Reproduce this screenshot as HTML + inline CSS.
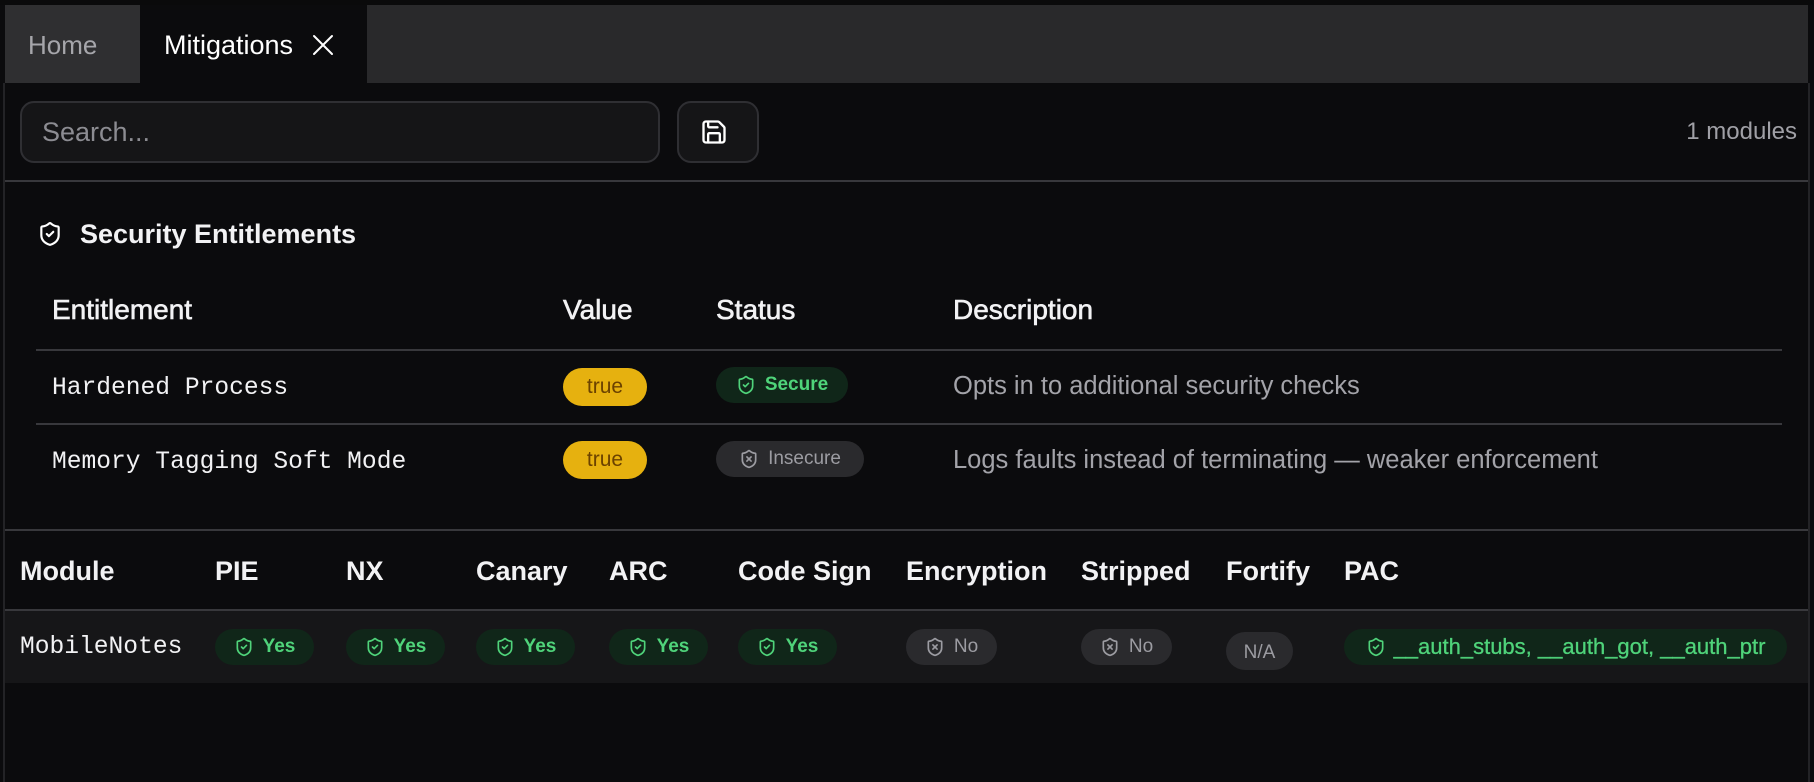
<!DOCTYPE html>
<html><head><meta charset="utf-8"><style>
*{margin:0;padding:0;box-sizing:border-box}
body{width:1814px;height:782px;background:#0b0b0d;position:relative;overflow:hidden;font-family:"Liberation Sans",sans-serif;color:#f2f2f4}
.a{position:absolute;white-space:nowrap}
.mono{font-family:"Liberation Mono",monospace}
.hd{font-size:27px;font-weight:bold;line-height:32px}
.th{font-size:28px;line-height:32px;font-weight:normal;-webkit-text-stroke:0.6px #f2f2f4}
.mh{font-size:27px;line-height:32px;font-weight:bold}
.b{position:absolute;height:36px;border-radius:18px;display:flex;align-items:center;justify-content:center;gap:9px;font-size:19px;font-weight:bold}
.g{background:#102619;color:#4fd37a}
.x{background:#2a2a2d;color:#9c9ca2}
.tr{background:#e6b10f;color:#6b4200;font-weight:normal;font-size:21px}
.ln{position:absolute;height:2px;background:#38383c}
</style></head><body>
<div class="a" style="left:0;top:0;width:1814px;height:5px;background:#0a0a0b"></div>
<div class="a" style="left:5px;top:5px;width:1803px;height:78px;background:#29292b"></div>
<div class="a" style="left:5px;top:5px;width:135px;height:78px;background:#2f2f31"></div>
<div class="a" style="left:28px;top:29px;font-size:26px;line-height:32px;color:#a6a6ab">Home</div>
<div class="a" style="left:140px;top:5px;width:227px;height:78px;background:#0b0b0d"></div>
<div class="a" style="left:164px;top:29px;font-size:27px;line-height:32px;color:#fff">Mitigations</div>
<svg class="a" style="left:311px;top:33px" width="24" height="24" viewBox="0 0 24 24" fill="none" stroke="#fff" stroke-width="2" stroke-linecap="round"><path d="M3 3L21 21M21 3L3 21"/></svg>
<div class="a" style="left:3px;top:83px;width:2px;height:699px;background:#232326"></div>
<div class="a" style="left:1808px;top:83px;width:2px;height:699px;background:#232326"></div>
<div class="a" style="left:20px;top:101px;width:640px;height:62px;border:2px solid #2f2f33;border-radius:14px;background:#151517"></div>
<div class="a" style="left:42px;top:116px;font-size:27px;line-height:32px;color:#8c8c92">Search...</div>
<div class="a" style="left:677px;top:101px;width:82px;height:62px;border:2px solid #2f2f33;border-radius:14px;background:#151517"></div>
<svg class="a" style="left:700px;top:118px" width="28" height="28" viewBox="0 0 24 24" fill="none" stroke="#fff" stroke-width="2" stroke-linecap="round" stroke-linejoin="round"><path d="M15.2 3a2 2 0 0 1 1.4.6l3.8 3.8a2 2 0 0 1 .6 1.4V19a2 2 0 0 1-2 2H5a2 2 0 0 1-2-2V5a2 2 0 0 1 2-2z"/><path d="M17 21v-7a1 1 0 0 0-1-1H8a1 1 0 0 0-1 1v7"/><path d="M7 3v4a1 1 0 0 0 1 1h7"/></svg>
<div class="a" style="right:17px;top:118px;font-size:24px;line-height:28px;color:#a0a0a6">1 modules</div>
<div class="ln" style="left:5px;top:180px;width:1803px"></div>
<svg class="a" style="left:37px;top:221px" width="26" height="26" viewBox="0 0 24 24" fill="none" stroke="#fff" stroke-width="2" stroke-linecap="round" stroke-linejoin="round"><path d="M20 13c0 5-3.5 7.5-7.66 8.95a1 1 0 0 1-.67-.01C7.5 20.5 4 18 4 13V6a1 1 0 0 1 1-1c2 0 4.5-1.2 6.24-2.72a1.17 1.17 0 0 1 1.52 0C14.51 3.81 17 5 19 5a1 1 0 0 1 1 1z"/><path d="m9 12 2 2 4-4"/></svg>
<div class="a hd" style="left:80px;top:218px">Security Entitlements</div>
<div class="a th" style="left:52px;top:294px">Entitlement</div>
<div class="a th" style="left:563px;top:294px">Value</div>
<div class="a th" style="left:716px;top:294px">Status</div>
<div class="a th" style="left:953px;top:294px">Description</div>
<div class="ln" style="left:36px;top:349px;width:1746px"></div>
<div class="a mono" style="left:52px;top:375px;font-size:24.6px;line-height:28px">Hardened Process</div>
<div class="b tr" style="left:563px;top:368px;width:84px;height:38px;border-radius:19px">true</div>
<div class="b g" style="left:716px;top:367px;width:132px">
<svg width="20" height="20" viewBox="0 0 24 24" fill="none" stroke="currentColor" stroke-width="2" stroke-linecap="round" stroke-linejoin="round"><path d="M20 13c0 5-3.5 7.5-7.66 8.95a1 1 0 0 1-.67-.01C7.5 20.5 4 18 4 13V6a1 1 0 0 1 1-1c2 0 4.5-1.2 6.24-2.72a1.17 1.17 0 0 1 1.52 0C14.51 3.81 17 5 19 5a1 1 0 0 1 1 1z"/><path d="m9 12 2 2 4-4"/></svg>Secure</div>
<div class="a" style="left:953px;top:371px;font-size:25.5px;line-height:30px;color:#a3a3a9">Opts in to additional security checks</div>
<div class="ln" style="left:36px;top:423px;width:1746px"></div>
<div class="a mono" style="left:52px;top:449px;font-size:24.6px;line-height:28px">Memory Tagging Soft Mode</div>
<div class="b tr" style="left:563px;top:441px;width:84px;height:38px;border-radius:19px">true</div>
<div class="b x" style="left:716px;top:441px;width:148px;font-weight:normal">
<svg width="20" height="20" viewBox="0 0 24 24" fill="none" stroke="currentColor" stroke-width="2" stroke-linecap="round" stroke-linejoin="round"><path d="M20 13c0 5-3.5 7.5-7.66 8.95a1 1 0 0 1-.67-.01C7.5 20.5 4 18 4 13V6a1 1 0 0 1 1-1c2 0 4.5-1.2 6.24-2.72a1.17 1.17 0 0 1 1.52 0C14.51 3.81 17 5 19 5a1 1 0 0 1 1 1z"/><path d="m14.5 9.5-5 5M9.5 9.5l5 5"/></svg>Insecure</div>
<div class="a" style="left:953px;top:445px;font-size:25.5px;line-height:30px;color:#a3a3a9">Logs faults instead of terminating — weaker enforcement</div>
<div class="ln" style="left:5px;top:529px;width:1803px"></div>
<div class="a mh" style="left:20px;top:555px">Module</div>
<div class="a mh" style="left:215px;top:555px">PIE</div>
<div class="a mh" style="left:346px;top:555px">NX</div>
<div class="a mh" style="left:476px;top:555px">Canary</div>
<div class="a mh" style="left:609px;top:555px">ARC</div>
<div class="a mh" style="left:738px;top:555px">Code Sign</div>
<div class="a mh" style="left:906px;top:555px">Encryption</div>
<div class="a mh" style="left:1081px;top:555px">Stripped</div>
<div class="a mh" style="left:1226px;top:555px">Fortify</div>
<div class="a mh" style="left:1344px;top:555px">PAC</div>
<div class="ln" style="left:5px;top:609px;width:1803px"></div>
<div class="a" style="left:5px;top:611px;width:1803px;height:72px;background:#161618"></div>
<div class="a mono" style="left:20px;top:634px;font-size:24.6px;line-height:28px">MobileNotes</div>
<div class="b g" style="left:215px;top:629px;width:99px"><svg width="20" height="20" viewBox="0 0 24 24" fill="none" stroke="currentColor" stroke-width="2" stroke-linecap="round" stroke-linejoin="round"><path d="M20 13c0 5-3.5 7.5-7.66 8.95a1 1 0 0 1-.67-.01C7.5 20.5 4 18 4 13V6a1 1 0 0 1 1-1c2 0 4.5-1.2 6.24-2.72a1.17 1.17 0 0 1 1.52 0C14.51 3.81 17 5 19 5a1 1 0 0 1 1 1z"/><path d="m9 12 2 2 4-4"/></svg>Yes</div>
<div class="b g" style="left:346px;top:629px;width:99px"><svg width="20" height="20" viewBox="0 0 24 24" fill="none" stroke="currentColor" stroke-width="2" stroke-linecap="round" stroke-linejoin="round"><path d="M20 13c0 5-3.5 7.5-7.66 8.95a1 1 0 0 1-.67-.01C7.5 20.5 4 18 4 13V6a1 1 0 0 1 1-1c2 0 4.5-1.2 6.24-2.72a1.17 1.17 0 0 1 1.52 0C14.51 3.81 17 5 19 5a1 1 0 0 1 1 1z"/><path d="m9 12 2 2 4-4"/></svg>Yes</div>
<div class="b g" style="left:476px;top:629px;width:99px"><svg width="20" height="20" viewBox="0 0 24 24" fill="none" stroke="currentColor" stroke-width="2" stroke-linecap="round" stroke-linejoin="round"><path d="M20 13c0 5-3.5 7.5-7.66 8.95a1 1 0 0 1-.67-.01C7.5 20.5 4 18 4 13V6a1 1 0 0 1 1-1c2 0 4.5-1.2 6.24-2.72a1.17 1.17 0 0 1 1.52 0C14.51 3.81 17 5 19 5a1 1 0 0 1 1 1z"/><path d="m9 12 2 2 4-4"/></svg>Yes</div>
<div class="b g" style="left:609px;top:629px;width:99px"><svg width="20" height="20" viewBox="0 0 24 24" fill="none" stroke="currentColor" stroke-width="2" stroke-linecap="round" stroke-linejoin="round"><path d="M20 13c0 5-3.5 7.5-7.66 8.95a1 1 0 0 1-.67-.01C7.5 20.5 4 18 4 13V6a1 1 0 0 1 1-1c2 0 4.5-1.2 6.24-2.72a1.17 1.17 0 0 1 1.52 0C14.51 3.81 17 5 19 5a1 1 0 0 1 1 1z"/><path d="m9 12 2 2 4-4"/></svg>Yes</div>
<div class="b g" style="left:738px;top:629px;width:99px"><svg width="20" height="20" viewBox="0 0 24 24" fill="none" stroke="currentColor" stroke-width="2" stroke-linecap="round" stroke-linejoin="round"><path d="M20 13c0 5-3.5 7.5-7.66 8.95a1 1 0 0 1-.67-.01C7.5 20.5 4 18 4 13V6a1 1 0 0 1 1-1c2 0 4.5-1.2 6.24-2.72a1.17 1.17 0 0 1 1.52 0C14.51 3.81 17 5 19 5a1 1 0 0 1 1 1z"/><path d="m9 12 2 2 4-4"/></svg>Yes</div>
<div class="b x" style="left:906px;top:629px;width:91px;font-weight:normal"><svg width="20" height="20" viewBox="0 0 24 24" fill="none" stroke="currentColor" stroke-width="2" stroke-linecap="round" stroke-linejoin="round"><path d="M20 13c0 5-3.5 7.5-7.66 8.95a1 1 0 0 1-.67-.01C7.5 20.5 4 18 4 13V6a1 1 0 0 1 1-1c2 0 4.5-1.2 6.24-2.72a1.17 1.17 0 0 1 1.52 0C14.51 3.81 17 5 19 5a1 1 0 0 1 1 1z"/><path d="m14.5 9.5-5 5M9.5 9.5l5 5"/></svg>No</div>
<div class="b x" style="left:1081px;top:629px;width:91px;font-weight:normal"><svg width="20" height="20" viewBox="0 0 24 24" fill="none" stroke="currentColor" stroke-width="2" stroke-linecap="round" stroke-linejoin="round"><path d="M20 13c0 5-3.5 7.5-7.66 8.95a1 1 0 0 1-.67-.01C7.5 20.5 4 18 4 13V6a1 1 0 0 1 1-1c2 0 4.5-1.2 6.24-2.72a1.17 1.17 0 0 1 1.52 0C14.51 3.81 17 5 19 5a1 1 0 0 1 1 1z"/><path d="m14.5 9.5-5 5M9.5 9.5l5 5"/></svg>No</div>
<div class="b x" style="left:1226px;top:632px;width:67px;height:38px;border-radius:19px;font-weight:normal;padding-top:4px">N/A</div>
<div class="b g" style="left:1344px;top:629px;width:443px;font-weight:normal;font-size:22px;gap:8px;-webkit-text-stroke:0.3px #4fd37a"><svg width="20" height="20" viewBox="0 0 24 24" fill="none" stroke="currentColor" stroke-width="2" stroke-linecap="round" stroke-linejoin="round"><path d="M20 13c0 5-3.5 7.5-7.66 8.95a1 1 0 0 1-.67-.01C7.5 20.5 4 18 4 13V6a1 1 0 0 1 1-1c2 0 4.5-1.2 6.24-2.72a1.17 1.17 0 0 1 1.52 0C14.51 3.81 17 5 19 5a1 1 0 0 1 1 1z"/><path d="m9 12 2 2 4-4"/></svg>__auth_stubs, __auth_got, __auth_ptr</div>
</body></html>
